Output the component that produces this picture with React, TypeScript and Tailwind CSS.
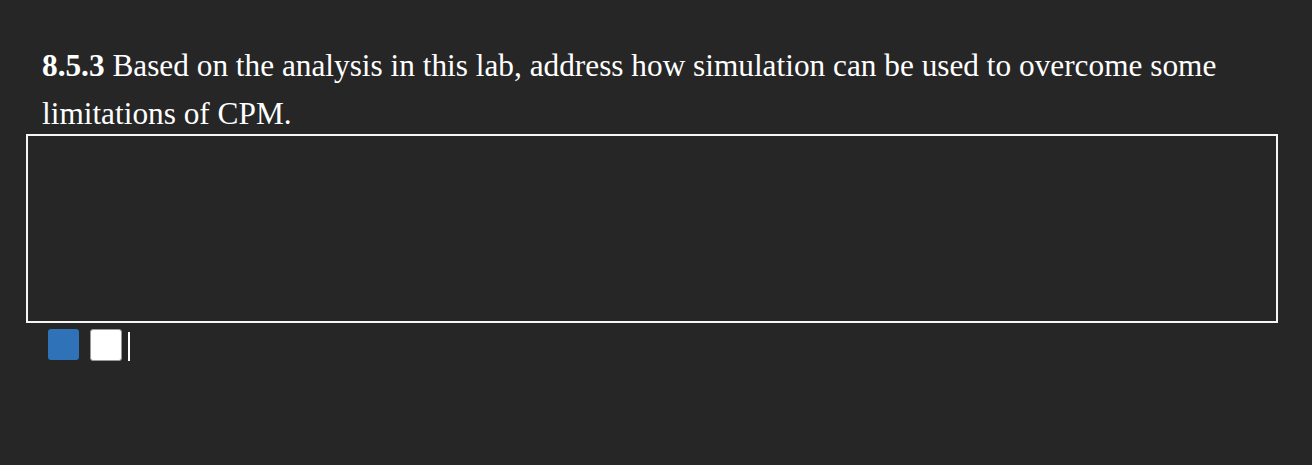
import React from "react";

export default function App() {
  return (
    <div className="min-h-[465px] w-full bg-[#262626] pt-[42px] pl-[26px] pr-[34px] font-['Liberation_Serif',serif] text-white">
      <p className="-mb-[4px] pl-4 text-[31.3px] leading-[48px]">
        <span className="font-bold">8.5.3</span> Based on the analysis in this lab, address how simulation can be used to overcome some limitations of CPM.
      </p>
      <div className="h-[189px] w-[1252px] border-2 border-[#f5f5f5]"></div>
      <div className="mt-[5px] flex items-center pl-[22px]">
        <div className="h-[31px] w-[31px] rounded-[3px] bg-[#2f72b8]"></div>
        <div className="ml-[11px] h-[32px] w-[32px] rounded-[3px] border border-[#999] bg-white"></div>
        <div className="ml-[6px] mt-[4px] h-[29px] w-[2px] bg-white"></div>
      </div>
    </div>
  );
}
